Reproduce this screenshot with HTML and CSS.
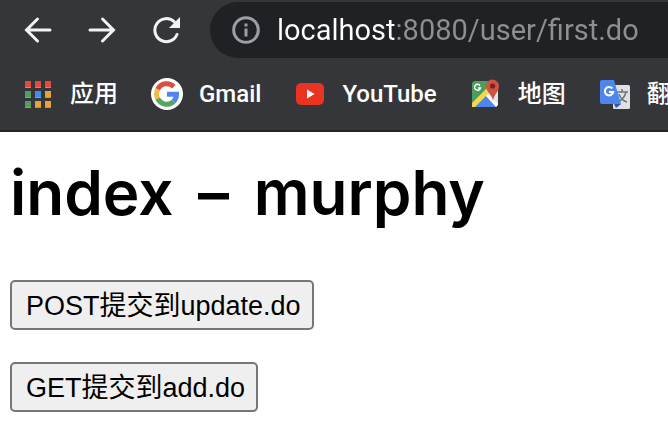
FILE: index.html
```
<!DOCTYPE html>
<html lang="zh-CN">
<head>
    <meta charset="UTF-8">
    <meta name="viewport" content="width=device-width, initial-scale=1.0">
    <title>index – murphy</title>
    <link rel="stylesheet" href="styles.css">
</head>
<body>
    <header class="browser">
        <div class="toolbar">
            <button class="nav-btn" type="button" aria-label="后退">
                <svg width="28" height="28" viewBox="0 0 28 28"><path d="M26 14H3M13.500 3L2.500 14l11 11"/></svg>
            </button>
            <button class="nav-btn" type="button" aria-label="前进">
                <svg width="28" height="28" viewBox="0 0 28 28"><path d="M2 14h23M14.500 3l11 11-11 11"/></svg>
            </button>
            <button class="nav-btn" type="button" aria-label="刷新">
                <svg width="28" height="28" viewBox="0 0 28 28"><path d="M25 18.500A11.500 11.500 0 1 1 22.500 6"/><path class="solid" d="M28 1v11H17z"/></svg>
            </button>
            <label class="address">
                <svg class="info-icon" width="28" height="28" viewBox="0 0 28 28">
                    <circle cx="14" cy="14" r="12.300"/>
                    <path d="M14 12.500v8M14 7.500v3"/>
                </svg>
                <input class="url" type="text" value="localhost:8080/user/first.do" aria-label="地址" spellcheck="false">
            </label>
        </div>

        <nav class="bookmarks">
            <a class="bookmark" href="#">
                <svg width="32" height="32" viewBox="-2 -2 32 32">
                    <path fill="#999" d="M1 6h6v2H1zM11 6h6v2h-6zM21 6h6v2h-6zM1 16h6v2H1zM11 16h6v2h-6zM21 16h6v2h-6zM1 26h6v2H1zM11 26h6v2h-6zM21 26h6v2h-6z"/>
                    <path fill="#e64a3c" d="M1 1h6v6H1zM11 1h6v6h-6zM21 1h6v6h-6z"/>
                    <path fill="#549d5f" d="M1 11h6v6H1zM1 21h6v6H1z"/>
                    <path fill="#438bf0" d="M11 11h6v6h-6z"/>
                    <path fill="#e7a336" d="M21 11h6v6h-6zM11 21h6v6h-6zM21 21h6v6h-6z"/>
                </svg>
                <span>应用</span>
            </a>
            <a class="bookmark" href="#">
                <svg width="32" height="32" viewBox="0 0 32 32">
                    <circle cx="16" cy="16" r="16" fill="#fff"/>
                    <g fill="none" stroke-width="5">
                        <path stroke="#d95040" d="M6.700 11.300A10 10 0 0 1 22.800 8.700"/>
                        <path stroke="#f2bd42" d="M6.700 20.700a10 10 0 0 1 0-9.400"/>
                        <path stroke="#58a55c" d="M22.500 23.600A10 10 0 0 1 6.700 20.700"/>
                        <path stroke="#5186ec" d="M16 16.300h9.500a10 10 0 0 1-3 7.300"/>
                    </g>
                </svg>
                <span>Gmail</span>
            </a>
            <a class="bookmark" href="#">
                <svg width="32" height="32" viewBox="-1 0 32 32">
                    <rect x="1" y="5" width="28" height="22" rx="5" fill="#ea3323"/>
                    <path fill="#fff" d="M12 11.500v9l7.500-4.500z"/>
                </svg>
                <span>YouTube</span>
            </a>
            <a class="bookmark" href="#">
                <svg width="32" height="32" viewBox="0 0 32 32">
                    <path fill="#4b9d5d" d="M4 3h22v26H2V5z"/>
                    <path fill="#e4e4e4" d="M16 16l12-8v19l-2 2z"/>
                    <path fill="#4f86ec" d="M15 17L3 29h23z"/>
                    <path fill="#fff" d="M15 17l2-2 11 11-2 3z"/>
                    <path fill="#f7d64a" d="M2 25L17 10l2 5L5 29H2z"/>
                    <path fill="none" stroke="#fff" stroke-width="1.400" d="M10 7.500a3 3 0 1 0 .500 2.500H8"/>
                    <path fill="#cf5242" d="M23 23c-1-7-7-9-7-15a6.500 6.500 0 0 1 13 0c0 6-5 8-6 15z"/>
                    <circle cx="22.600" cy="8" r="2.600" fill="#75251d"/>
                </svg>
                <span>地图</span>
            </a>
            <a class="bookmark" href="#">
                <svg width="32" height="32" viewBox="0 0 32 32">
                    <rect x="14" y="7" width="17" height="24" rx="1.500" fill="#dfe0e2"/>
                    <path fill="none" stroke="#607983" stroke-width="1.500" d="M18 14h11M23 11v3M27 14c-1 4-4 8-8 10M20 16c1 3 4 7 8 8"/>
                    <path fill="#3551a8" d="M15 26h7l-5 4z"/>
                    <path fill="#4f86ec" d="M3 2h12l7 24H3a2 2 0 0 1-2-2V4a2 2 0 0 1 2-2z"/>
                    <path fill="none" stroke="#fff" stroke-width="2" d="M13.300 10.500a4.200 4.200 0 1 0 .900 3.500H10"/>
                </svg>
                <span>翻译</span>
            </a>
        </nav>
    </header>

    <main class="page">
        <h1>index <span class="dash">–</span> murphy</h1>
        <form action="update.do" method="post">
            <button class="submit-btn" type="submit">POST提交到update.do</button>
        </form>
        <form action="add.do" method="get">
            <button class="submit-btn" type="submit">GET提交到add.do</button>
        </form>
    </main>
</body>
</html>
```

FILE: styles.css
```
* {
    box-sizing: border-box;
}

body {
    margin: 0;
    background: #fff;
    color: #000;
    font-family: "Liberation Sans", "Noto Sans CJK SC", sans-serif;
}

.browser {
    background: #35363a;
    border-bottom: 2px solid #282224;
    overflow: hidden;
}

.toolbar {
    display: flex;
    align-items: center;
    gap: 36px;
    padding: 2px 0 0 24px;
}

.nav-btn {
    flex: none;
    width: 28px;
    height: 28px;
    padding: 0;
    border: 0;
    background: none;
    cursor: pointer;
}

.nav-btn svg {
    display: block;
    fill: none;
    stroke: #f1f3f4;
    stroke-width: 3;
    stroke-linecap: round;
}

.nav-btn .solid {
    fill: #f1f3f4;
    stroke: none;
}

.address {
    flex: 1;
    display: flex;
    align-items: center;
    gap: 17px;
    height: 56px;
    margin-left: -6px;
    padding-left: 22px;
    border-radius: 28px 0 0 28px;
    background: #202124;
}

.info-icon {
    flex: none;
    fill: none;
    stroke: #9aa0a6;
    stroke-width: 3;
}

/* host part is white, the rest of the url is grey */
.url {
    flex: 1;
    min-width: 0;
    padding: 0;
    border: 0;
    outline: 0;
    background: linear-gradient(to right, #fff 119px, #8e8f92 119px);
    -webkit-background-clip: text;
    background-clip: text;
    color: transparent;
    caret-color: #fff;
    font-family: Roboto, "Noto Sans CJK SC", sans-serif;
    font-size: 29px;
    line-height: 36px;
}

.bookmarks {
    display: flex;
    align-items: center;
    gap: 33px;
    height: 72px;
    padding-left: 22px;
}

.bookmark {
    flex: none;
    display: flex;
    align-items: center;
    gap: 16px;
    color: #fff;
    font-family: Roboto, "Noto Sans CJK SC", sans-serif;
    font-size: 24px;
    font-weight: 500;
    line-height: 36px;
    text-decoration: none;
}

.page {
    display: flex;
    flex-direction: column;
    gap: 32px;
    padding: 21px 10px 20px;
}

h1 {
    margin: 0 0 15px;
    font-family: Inter, sans-serif;
    font-size: 62px;
    font-weight: 600;
    line-height: 80px;
}

.dash {
    margin: 0 9px;
}

form {
    margin: 0;
}

.submit-btn {
    display: block;
    height: 50px;
    padding: 0 11px 4px 14px;
    border: 2px solid #767676;
    border-radius: 5px;
    background: #efefef;
    color: #000;
    font-family: "Liberation Sans", "Noto Sans CJK SC", sans-serif;
    font-size: 27px;
    cursor: pointer;
}
```
